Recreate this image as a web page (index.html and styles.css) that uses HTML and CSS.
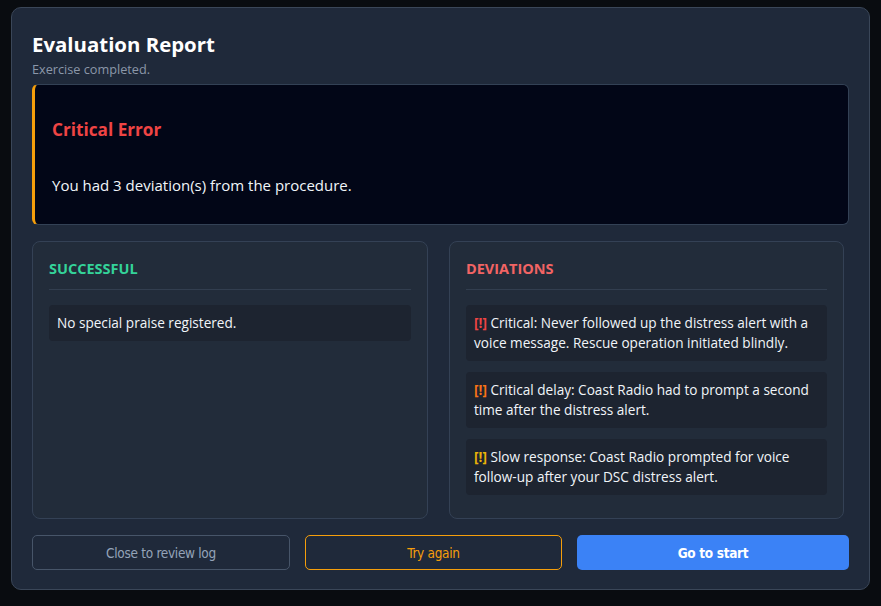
FILE: index.html
```html
<!DOCTYPE html>
<html lang="en">
<head>
    <meta charset="UTF-8">
    <title>Evaluation Report</title>
    <link rel="stylesheet" href="styles.css">
</head>
<body>
    <div class="modal">
        <h1>Evaluation Report</h1>
        <p class="subtitle">Exercise completed.</p>

        <div class="verdict">
            <h2>Critical Error</h2>
            <p>You had 3 deviation(s) from the procedure.</p>
        </div>

        <div class="columns">
            <div class="card">
                <h3 class="good">SUCCESSFUL</h3>
                <div class="item">No special praise registered.</div>
            </div>
            <div class="card">
                <h3 class="bad">DEVIATIONS</h3>
                <div class="item"><span class="mark red">[!]</span> Critical: Never followed up the distress alert with a voice message. Rescue operation initiated blindly.</div>
                <div class="item"><span class="mark orange">[!]</span> Critical delay: Coast Radio had to prompt a second time after the distress alert.</div>
                <div class="item"><span class="mark amber">[!]</span> Slow response: Coast Radio prompted for voice follow-up after your DSC distress alert.</div>
            </div>
        </div>

        <div class="actions">
            <button class="btn ghost">Close to review log</button>
            <button class="btn retry">Try again</button>
            <button class="btn primary">Go to start</button>
        </div>
    </div>
</body>
</html>
```

FILE: styles.css
```css
* {
    box-sizing: border-box;
    margin: 0;
    padding: 0;
}

body {
    background-color: #090c10;
    font-family: "Open Sans", "Noto Sans", sans-serif;
    color: #f1f5f9;
    padding: 7px 11px;
}

.modal {
    width: 859px;
    height: 583px;
    background-color: #1f293a;
    border: 1px solid #3a4658;
    border-radius: 10px;
    padding: 22px 20px 20px 20px;
}

h1 {
    font-size: 20.4px;
    font-weight: 700;
    line-height: 28px;
    color: #ffffff;
}

.subtitle {
    font-size: 12.7px;
    color: #8b97a9;
    line-height: 18px;
    margin-top: 2px;
    margin-bottom: 6px;
}

.verdict {
    height: 141px;
    background-color: #020617;
    border: 1px solid #334155;
    border-left: 3px solid #f59e0b;
    border-radius: 6px;
    padding: 33px 17px 0 17px;
}

.verdict h2 {
    font-size: 17.2px;
    font-weight: 700;
    color: #ef4444;
    line-height: 24px;
    margin-bottom: 33px;
}

.verdict p {
    font-size: 15px;
    line-height: 20px;
}

.columns {
    display: grid;
    grid-template-columns: 396px 395px;
    gap: 21px;
    margin-top: 16px;
    height: 278px;
}

.card {
    background-color: #222c3a;
    border: 1px solid #344155;
    border-radius: 8px;
    padding: 16px 16px 0 16px;
}

.card h3 {
    font-size: 14.5px;
    font-weight: 700;
    line-height: 22px;
    padding-bottom: 9px;
    border-bottom: 1px solid #323e4f;
    margin-bottom: 15px;
}

.good {
    color: #34d399;
}

.bad {
    color: #f26464;
}

.item {
    background-color: #1d2430;
    border-radius: 4px;
    padding: 8px;
    font-size: 13.6px;
    line-height: 20px;
    margin-bottom: 11px;
}

.mark {
    font-weight: 700;
}

.red {
    color: #ef4444;
}

.orange {
    color: #f97316;
}

.amber {
    color: #eab308;
}

.actions {
    display: grid;
    grid-template-columns: 258px 257px 1fr;
    gap: 15px;
    margin-top: 16px;
}

.btn {
    height: 35px;
    border-radius: 5px;
    font-family: "DejaVu Sans Condensed", "Liberation Sans", sans-serif;
    font-size: 13.5px;
    letter-spacing: -0.3px;
    background: transparent;
    cursor: pointer;
}

.ghost {
    border: 1px solid #475569;
    color: #94a3b8;
}

.retry {
    border: 1px solid #f59e0b;
    color: #f59e0b;
}

.primary {
    border: none;
    background-color: #3b82f6;
    color: #ffffff;
    font-weight: 700;
}
```
